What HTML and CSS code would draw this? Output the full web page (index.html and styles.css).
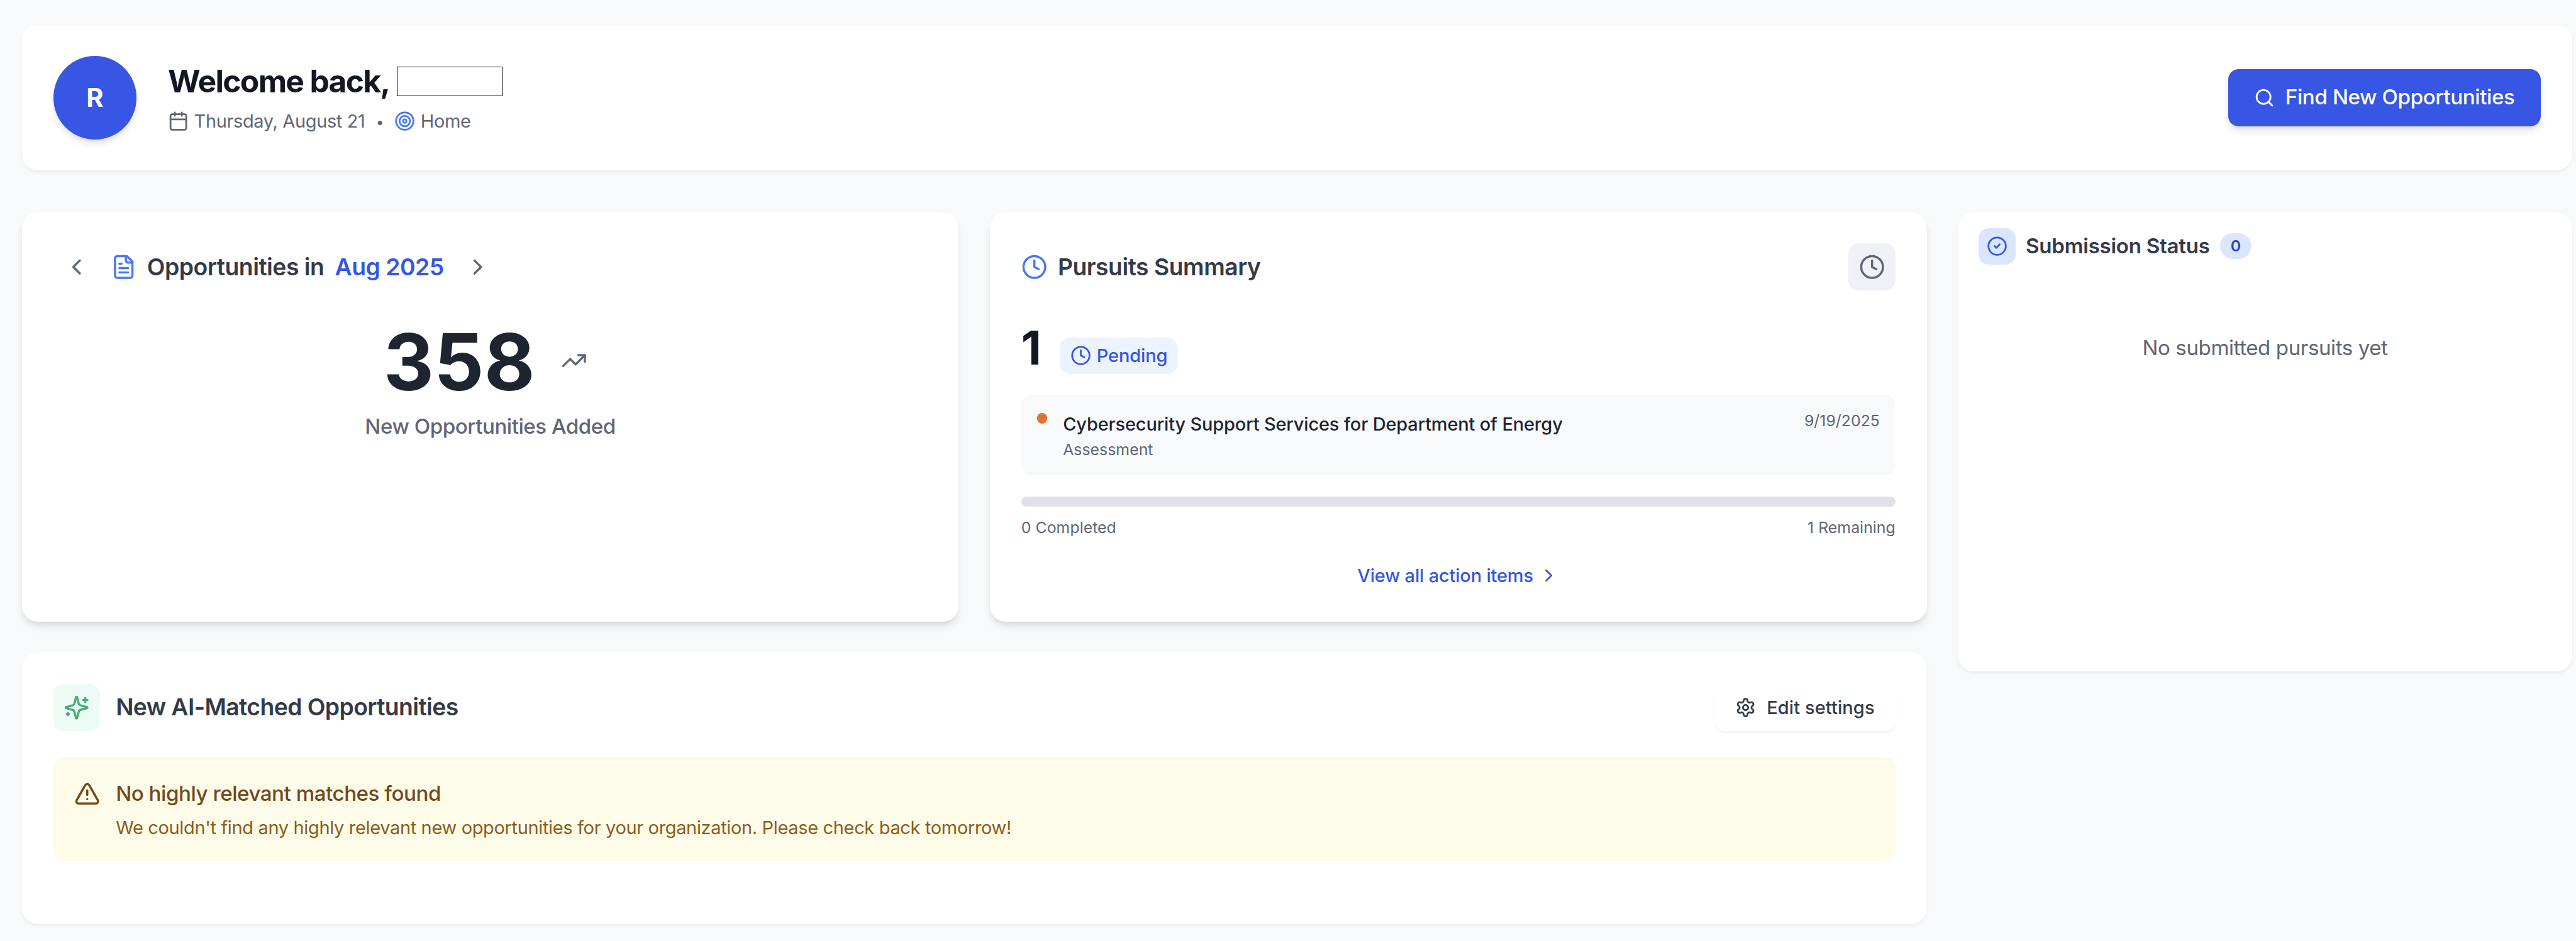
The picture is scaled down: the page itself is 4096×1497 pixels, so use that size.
FILE: index.html
```html
<!DOCTYPE html>
<html lang="en">
<head>
<meta charset="utf-8">
<title>Home</title>
<link rel="stylesheet" href="styles.css">
</head>
<body>
<main class="page">
  <header class="card header">
    <div class="avatar">R</div>
    <div class="greeting">
      <h1 class="greeting-title">Welcome back, <span class="name-box"></span></h1>
      <div class="meta">
        <span class="meta-item">
          <svg class="icon sm" viewBox="0 0 24 24"><path d="M8 2v4M16 2v4M3 10h18"/><rect x="3" y="4" width="18" height="18" rx="2"/></svg>
          Thursday, August 21
        </span>
        <span class="bullet">•</span>
        <span class="meta-item">
          <svg class="icon sm bright" viewBox="0 0 24 24"><circle cx="12" cy="12" r="10"/><circle cx="12" cy="12" r="6"/><circle cx="12" cy="12" r="2"/></svg>
          Home
        </span>
      </div>
    </div>
    <button class="primary">
      <svg class="icon sm" viewBox="0 0 24 24"><circle cx="11" cy="11" r="8"/><path d="m21 21-4.3-4.3"/></svg>
      Find New Opportunities
    </button>
  </header>

  <div class="layout">
    <div class="main-column">
      <section class="card raised opportunities">
        <div class="month-nav">
          <button class="nav-button"><svg class="icon" viewBox="0 0 24 24"><path d="m15 18-6-6 6-6"/></svg></button>
          <h2 class="card-title">
            <svg class="icon bright" viewBox="0 0 24 24"><path d="M15 2H6a2 2 0 0 0-2 2v16a2 2 0 0 0 2 2h12a2 2 0 0 0 2-2V7Z"/><path d="M14 2v4a2 2 0 0 0 2 2h4M10 9H8M16 13H8M16 17H8"/></svg>
            <span>Opportunities in <span class="month">Aug 2025</span></span>
          </h2>
          <button class="nav-button"><svg class="icon" viewBox="0 0 24 24"><path d="m9 18 6-6-6-6"/></svg></button>
        </div>
        <div class="count-row">
          <span class="count">358</span>
          <span class="trend"><svg class="icon" viewBox="0 0 24 24"><path d="m22 7-8.5 8.5-5-5L2 17"/><path d="M16 7h6v6"/></svg></span>
        </div>
        <p class="count-label">New Opportunities Added</p>
      </section>

      <section class="card raised pursuits">
        <div class="card-head">
          <h2 class="card-title">
            <svg class="icon bright" viewBox="0 0 24 24"><circle cx="12" cy="12" r="10"/><path d="M12 6v6l4 2"/></svg>
            Pursuits Summary
          </h2>
          <button class="nav-button filled"><svg class="icon" viewBox="0 0 24 24"><circle cx="12" cy="12" r="10"/><path d="M12 6v6l4 2"/></svg></button>
        </div>
        <div class="pending-row">
          <span class="pending-count">1</span>
          <span class="pending-badge">
            <svg class="icon sm" viewBox="0 0 24 24"><circle cx="12" cy="12" r="10"/><path d="M12 6v6l4 2"/></svg>
            Pending
          </span>
        </div>
        <div class="pursuit">
          <span class="dot"></span>
          <div class="pursuit-text">
            <div class="pursuit-name">Cybersecurity Support Services for Department of Energy</div>
            <div class="pursuit-stage">Assessment</div>
          </div>
          <time class="pursuit-date">9/19/2025</time>
        </div>
        <div class="progress"></div>
        <div class="progress-labels"><span>0 Completed</span><span>1 Remaining</span></div>
        <div class="view-all">
          <a class="link">View all action items <svg class="icon sm" viewBox="0 0 24 24"><path d="m9 18 6-6-6-6"/></svg></a>
        </div>
      </section>

      <section class="card matches">
        <div class="card-head">
          <h2 class="card-title wide">
            <span class="sparkle-tile"><svg class="icon" viewBox="0 0 24 24"><path d="M9.937 15.5A2 2 0 0 0 8.5 14.063l-6.135-1.582a.5.5 0 0 1 0-.962L8.5 9.936A2 2 0 0 0 9.937 8.5l1.582-6.135a.5.5 0 0 1 .963 0L14.063 8.5A2 2 0 0 0 15.5 9.937l6.135 1.581a.5.5 0 0 1 0 .964L15.5 14.063a2 2 0 0 0-1.437 1.437l-1.582 6.135a.5.5 0 0 1-.963 0z"/><path d="M20 3v4M22 5h-4M4 17v2M5 18H3"/></svg></span>
            New AI-Matched Opportunities
          </h2>
          <button class="settings">
            <svg class="icon sm" viewBox="0 0 24 24"><path d="M12.22 2h-.44a2 2 0 0 0-2 2v.18a2 2 0 0 1-1 1.73l-.43.25a2 2 0 0 1-2 0l-.15-.08a2 2 0 0 0-2.73.73l-.22.38a2 2 0 0 0 .73 2.73l.15.1a2 2 0 0 1 1 1.72v.51a2 2 0 0 1-1 1.74l-.15.09a2 2 0 0 0-.73 2.73l.22.38a2 2 0 0 0 2.73.73l.15-.08a2 2 0 0 1 2 0l.43.25a2 2 0 0 1 1 1.73V20a2 2 0 0 0 2 2h.44a2 2 0 0 0 2-2v-.18a2 2 0 0 1 1-1.73l.43-.25a2 2 0 0 1 2 0l.15.08a2 2 0 0 0 2.73-.73l.22-.39a2 2 0 0 0-.73-2.73l-.15-.08a2 2 0 0 1-1-1.74v-.5a2 2 0 0 1 1-1.74l.15-.09a2 2 0 0 0 .73-2.73l-.22-.38a2 2 0 0 0-2.73-.73l-.15.08a2 2 0 0 1-2 0l-.43-.25a2 2 0 0 1-1-1.73V4a2 2 0 0 0-2-2z"/><circle cx="12" cy="12" r="3"/></svg>
            Edit settings
          </button>
        </div>
        <div class="notice">
          <svg class="icon" viewBox="0 0 24 24"><path d="m21.73 18-8-14a2 2 0 0 0-3.48 0l-8 14A2 2 0 0 0 4 21h16a2 2 0 0 0 1.73-3M12 9v4M12 17h.01"/></svg>
          <div class="notice-body">
            <h3 class="notice-title">No highly relevant matches found</h3>
            <p class="notice-text">We couldn't find any highly relevant new opportunities for your organization. Please check back tomorrow!</p>
          </div>
        </div>
      </section>
    </div>

    <aside class="card submissions">
      <div class="submissions-head">
        <span class="check-tile"><svg class="icon sm" viewBox="0 0 24 24"><circle cx="12" cy="12" r="10"/><path d="m9 12 2 2 4-4"/></svg></span>
        <h2 class="submissions-title">Submission Status</h2>
        <span class="count-badge">0</span>
      </div>
      <p class="empty">No submitted pursuits yet</p>
    </aside>
  </div>
</main>
</body>
</html>
```

FILE: styles.css
```css
:root {
  --blue: #3656e3;
  --blue-bright: #4777f0;
  --gray-900: #121722;
  --gray-800: #1f2530;
  --gray-700: #333a48;
  --gray-500: #5f6675;
  --shadow-sm: 0 0.0625rem 0.125rem 0 rgb(0 0 0 / 0.05);
  --shadow-md: 0 0.25rem 0.375rem -0.0625rem rgb(0 0 0 / 0.1), 0 0.125rem 0.25rem -0.125rem rgb(0 0 0 / 0.1);
}

html {
  font-size: 33.174px;
}

* {
  box-sizing: border-box;
  margin: 0;
}

body {
  height: 1497px;
  overflow: hidden;
  background: #f8f9fb;
  color: var(--gray-800);
  font-family: Inter, "Liberation Sans", sans-serif;
  font-size: 1rem;
  line-height: 1.5;
}

h1, h2, h3 {
  font-size: inherit;
  font-weight: inherit;
}

button {
  border: 0;
  background: none;
  color: inherit;
  font: inherit;
}

.page {
  display: flex;
  flex-direction: column;
  gap: 2rem;
  padding: 39.2px 6.3px 0 34.9px;
}

.card {
  border-radius: 0.75rem;
  background: #fff;
  box-shadow: var(--shadow-sm);
}

.raised {
  box-shadow: var(--shadow-md);
}

.icon {
  flex: none;
  display: block;
  width: 1.25rem;
  height: 1.25rem;
  fill: none;
  stroke: currentColor;
  stroke-width: 2;
  stroke-linecap: round;
  stroke-linejoin: round;
}

.sm {
  width: 1rem;
  height: 1rem;
}

.bright {
  color: var(--blue-bright);
}

/* Header */
.header {
  display: flex;
  align-items: center;
  gap: 1.5rem;
  padding: 1.5rem;
}

.avatar {
  display: flex;
  align-items: center;
  justify-content: center;
  width: 4rem;
  height: 4rem;
  border-radius: 50%;
  background: var(--blue);
  box-shadow: var(--shadow-md);
  color: #fff;
  font-size: 1.25rem;
  font-weight: 700;
}

.greeting {
  flex: 1;
  display: flex;
  flex-direction: column;
  gap: 0.25rem;
}

.greeting-title {
  display: flex;
  align-items: center;
  gap: 0.34rem;
  height: 2rem;
  color: var(--gray-900);
  font-size: 1.5rem;
  font-weight: 700;
  letter-spacing: -0.034em;
  line-height: 2rem;
}

.name-box {
  width: 168px;
  height: 47px;
  border: 1px solid #000;
}

.meta {
  display: flex;
  align-items: center;
  gap: 0.5rem;
  color: var(--gray-500);
  font-size: 0.875rem;
  letter-spacing: -0.0128em;
  line-height: 1.25rem;
}

.meta-item {
  display: flex;
  align-items: center;
  gap: 0.25rem;
}

.bullet {
  display: flex;
  justify-content: center;
  width: 0.41rem;
  padding-top: 0.06rem;
  font-size: 0.6875rem;
}

.primary {
  display: flex;
  align-items: center;
  gap: 0.5rem;
  height: 2.75rem;
  padding: 0 1.25rem;
  border-radius: 0.5rem;
  background: var(--blue);
  box-shadow: var(--shadow-md);
  color: #fff;
  font-weight: 500;
  letter-spacing: -0.0125em;
}

/* Page grid */
.layout {
  display: grid;
  grid-template-columns: repeat(4, 1fr);
  align-items: start;
  gap: 1.5rem;
}

.main-column {
  grid-column: span 3;
  display: grid;
  grid-template-columns: 1fr 1fr;
  gap: 1.5rem;
}

.card-head {
  display: flex;
  align-items: center;
  justify-content: space-between;
}

.card-title {
  display: flex;
  align-items: center;
  gap: 0.5rem;
  color: var(--gray-700);
  font-size: 1.125rem;
  font-weight: 600;
  letter-spacing: -0.0135em;
  line-height: 1.75rem;
}

.card-title.wide {
  gap: 0.75rem;
  letter-spacing: -0.0157em;
}

.nav-button {
  padding: 0.5rem;
  border-radius: 0.5rem;
  color: var(--gray-500);
}

.nav-button.filled {
  background: #f0f1f6;
}

/* Opportunities */
.opportunities {
  padding: 1.5rem;
}

.month-nav {
  display: flex;
  align-items: center;
  gap: 0.5rem;
}

.month {
  margin-left: 0.25rem;
  color: var(--blue);
}

.count-row {
  display: flex;
  align-items: center;
  justify-content: center;
  gap: 1rem;
  margin: 1.5rem 0.23rem 0 0;
}

.count {
  margin-bottom: -0.08rem;
  padding-top: 0.08rem;
  font-size: 3.75rem;
  font-weight: 700;
  line-height: 1;
}

.trend {
  padding: 0.25rem;
  color: var(--gray-500);
}

.count-label {
  margin-top: 0.53rem;
  color: var(--gray-500);
  font-weight: 500;
  letter-spacing: -0.0147em;
  text-align: center;
}

/* Pursuits */
.pursuits {
  padding: 1.5rem;
}

.pending-row {
  display: flex;
  align-items: flex-end;
  gap: 0.75rem;
  margin-top: 1.5rem;
}

.pending-count {
  width: 1.094rem;
  color: var(--gray-900);
  font-size: 2.25rem;
  font-weight: 700;
  line-height: 2.5rem;
}

.pending-badge {
  display: flex;
  align-items: center;
  gap: 0.27rem;
  padding: 0.25rem 0.5rem;
  border-radius: 0.5rem;
  background: #edf3fe;
  color: var(--blue);
  font-size: 0.875rem;
  font-weight: 500;
  letter-spacing: -0.005em;
  line-height: 1.25rem;
}

.pursuit {
  display: flex;
  align-items: flex-start;
  gap: 0.75rem;
  margin-top: 1rem;
  padding: 0.75rem;
  border-radius: 0.5rem;
  background: #f8f9fb;
}

.dot {
  width: 0.5rem;
  height: 0.5rem;
  margin-top: 0.125rem;
  border-radius: 50%;
  background: #e2732c;
}

.pursuit-text {
  flex: 1;
  margin-bottom: -0.03rem;
  padding-top: 0.03rem;
}

.pursuit-name {
  font-size: 0.875rem;
  font-weight: 500;
  letter-spacing: -0.0066em;
  line-height: 1.25rem;
}

.pursuit-stage {
  margin-top: 0.125rem;
}

.pursuit-stage,
.pursuit-date,
.progress-labels {
  color: var(--gray-500);
  font-size: 0.75rem;
  line-height: 1rem;
}

.progress {
  height: 0.5rem;
  margin-top: 1rem;
  border-radius: 0.25rem;
  background: #e1e2e8;
}

.progress-labels {
  display: flex;
  justify-content: space-between;
  margin-top: 0.5rem;
}

.view-all {
  display: flex;
  align-items: center;
  justify-content: center;
  height: 1.5rem;
  margin-top: 1rem;
  padding-top: 0.08rem;
}

.link {
  display: flex;
  align-items: center;
  gap: 0.25rem;
  color: var(--blue);
  font-size: 0.875rem;
  font-weight: 500;
  letter-spacing: -0.0065em;
  line-height: 1.25rem;
}

/* Matches */
.matches {
  grid-column: span 2;
  padding: 1.5rem 1.5rem 3rem;
}

.sparkle-tile {
  padding: 0.5rem;
  border-radius: 0.5rem;
  background: #ecfcf5;
  color: #4bab7a;
}

.settings {
  display: flex;
  align-items: center;
  gap: 0.5rem;
  padding: 0.5rem 1rem;
  border-radius: 0.5rem;
  background: #fff;
  box-shadow: var(--shadow-sm);
  color: var(--gray-700);
  font-size: 0.875rem;
  font-weight: 500;
  letter-spacing: 0.003em;
  line-height: 1.25rem;
}

.notice {
  display: flex;
  gap: 0.75rem;
  margin-top: 1.25rem;
  padding: 1rem;
  border-radius: 0.5rem;
  background: #fdfce8;
  color: #74481c;
}

.notice .icon {
  margin-top: 0.125rem;
}

.notice-body {
  margin-bottom: -0.03rem;
  padding-top: 0.03rem;
}

.notice-title {
  font-weight: 500;
  letter-spacing: -0.0147em;
}

.notice-text {
  margin-top: 0.25rem;
  color: #8f5c1c;
  font-size: 0.875rem;
  letter-spacing: -0.0123em;
  line-height: 1.25rem;
}

/* Submissions */
.submissions {
  height: 22rem;
  padding: 0.75rem 1rem;
}

.submissions-head {
  display: flex;
  align-items: center;
  gap: 0.5rem;
}

.check-tile {
  padding: 0.375rem;
  border-radius: 0.5rem;
  background: #dae6fd;
  color: var(--blue);
}

.submissions-title {
  color: var(--gray-700);
  font-weight: 600;
  letter-spacing: -0.0093em;
}

.count-badge {
  padding: 0.125rem 0.5rem;
  border-radius: 1rem;
  background: #dae6fd;
  color: #3044cd;
  font-size: 0.75rem;
  font-weight: 600;
  line-height: 1rem;
}

.empty {
  margin-top: 3.27rem;
  color: var(--gray-500);
  letter-spacing: -0.0135em;
  text-align: center;
}
```
